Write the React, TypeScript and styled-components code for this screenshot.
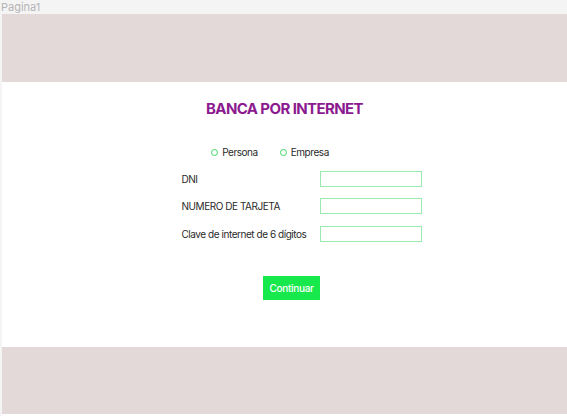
import React from "react";
import styled, { createGlobalStyle } from "styled-components";

const Global = createGlobalStyle`
  html, body { margin: 0; padding: 0; background: #f4f4f4; }
  body { font-family: Inter, "Noto Sans", sans-serif; }
`;

const Page = styled.div`
  width: 567px;
  height: 416px;
  display: flex;
  flex-direction: column;
  background: #f4f4f4;
  overflow: hidden;
`;

const TabBar = styled.div`
  height: 14px;
  display: flex;
  align-items: center;
  padding-left: 1px;
  font-size: 11px;
  line-height: 14px;
  color: #b4b4b4;
`;

const Frame = styled.div`
  flex: 1;
  margin-left: 2px;
  display: flex;
  flex-direction: column;
  background: #fff;
  padding-bottom: 2px;
`;

const Band = styled.div<{ $h: number }>`
  height: ${(p) => p.$h}px;
  background: #e2d9d8;
`;

const Main = styled.main`
  flex: 1;
  display: flex;
  flex-direction: column;
  align-items: center;
`;

const Title = styled.h1`
  margin: 18px 0 0 0;
  font-size: 15px;
  line-height: 18px;
  font-weight: 700;
  color: #8b1a8f;
  letter-spacing: -0.6px;
`;

const RadioRow = styled.div`
  display: flex;
  gap: 22px;
  margin: 28px 0 0 -29px;
`;

const Radio = styled.label`
  display: flex;
  align-items: center;
  gap: 4px;
  font-size: 10px;
  line-height: 12px;
  letter-spacing: -0.45px;
  color: #2a2a2a;
`;

const Dot = styled.span`
  width: 5px;
  height: 5px;
  border: 1px solid #3ed864;
  border-radius: 50%;
`;

const Form = styled.div`
  margin: 13px 0 0 34px;
  width: 240px;
  display: grid;
  grid-template-columns: 138px 102px;
  row-gap: 11px;
  align-items: center;
`;

const Label = styled.span`
  font-size: 10px;
  line-height: 12px;
  letter-spacing: -0.45px;
  white-space: nowrap;
  color: #2a2a2a;
`;

const Input = styled.div<{ $mt?: number }>`
  height: 14px;
  border: 1px solid #98eaad;
  margin-top: ${(p) => p.$mt ?? 0}px;
`;

const Button = styled.button`
  margin: 34px 0 0 14px;
  width: 57px;
  height: 24px;
  border: none;
  background: #17e84b;
  color: #fff;
  font-family: Inter, "Noto Sans", sans-serif;
  font-size: 10px;
  font-weight: 500;
  letter-spacing: -0.3px;
  padding: 0;
`;

export default function App() {
  return (
    <>
      <Global />
      <Page>
        <TabBar>Pagina1</TabBar>
        <Frame>
          <Band $h={68} />
          <Main>
            <Title>BANCA POR INTERNET</Title>
            <RadioRow>
              <Radio>
                <Dot />
                Persona
              </Radio>
              <Radio>
                <Dot />
                Empresa
              </Radio>
            </RadioRow>
            <Form>
              <Label>DNI</Label>
              <Input />
              <Label>NUMERO DE TARJETA</Label>
              <Input />
              <Label>Clave de internet de 6 dígitos</Label>
              <Input $mt={1} />
            </Form>
            <Button>Continuar</Button>
          </Main>
          <Band $h={67} />
        </Frame>
      </Page>
    </>
  );
}
